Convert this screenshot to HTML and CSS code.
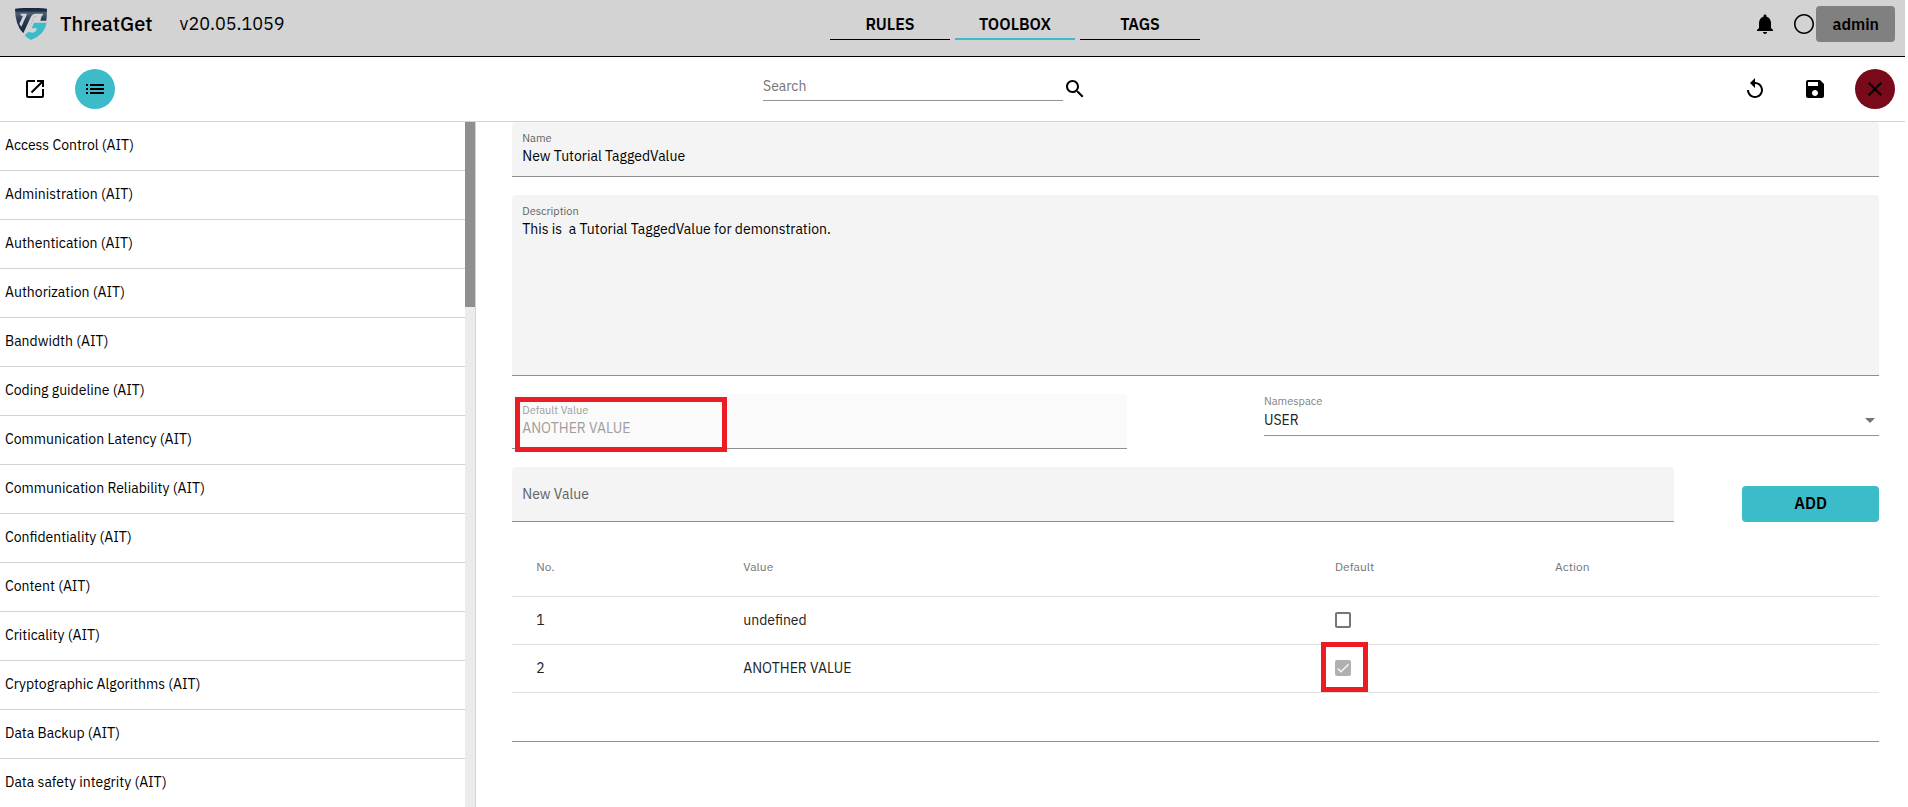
FILE: index.html
```html
<!DOCTYPE html>
<html lang="en">
<head>
    <meta charset="UTF-8">
    <title>ThreatGet</title>
    <link rel="stylesheet" href="styles.css">
</head>
<body>
    <header class="header">
        <div class="brand">
            <svg class="logo" viewBox="0 0 96 96">
                <defs>
                    <linearGradient id="navy" x1="0" y1="0" x2="0" y2="1">
                        <stop offset="0" stop-color="#14243b"/>
                        <stop offset="0.12" stop-color="#1d3048"/>
                        <stop offset="0.2" stop-color="#4f6175"/>
                        <stop offset="0.45" stop-color="#2a3d56"/>
                        <stop offset="1" stop-color="#14243b"/>
                    </linearGradient>
                </defs>
                <path fill="url(#navy)" d="M0 2 Q48 -3 96 2 Q96 22 94 38 H76 L80 24 H64 Q58 24 55 31 L46 54 L25 76 Q0 50 0 2 Z"/>
                <path fill="#d3d3d3" d="M16 17 H36 L34 23 L19 56 L13 48 L24 23 H18 Z"/>
                <path fill="#d3d3d3" d="M62 17 H84 L82 24 H64 Q58 24 55 31 L44 62 L27 79 L25 76 L47 28 Q51 17 62 17 Z"/>
                <path fill="#3bbccb" d="M57 44 H95 Q92 62 80 76 Q66 90 48 96 Q38 92 29 82 L39 72 L55 74 Q63 72 66 61 H50 Z"/>
            </svg>
            <span class="brand-name">ThreatGet</span>
            <span class="brand-version">v20.05.1059</span>
        </div>
        <nav class="tabs">
            <a class="tab" href="#">RULES</a>
            <a class="tab active" href="#">TOOLBOX</a>
            <a class="tab" href="#">TAGS</a>
        </nav>
        <div class="user">
            <button class="icon-link" aria-label="Notifications">
                <svg class="icon" viewBox="0 0 24 24"><path d="M12 22c1.100 0 2-.9 2-2h-4c0 1.100.9 2 2 2zm6-6v-5c0-3.070-1.630-5.640-4.500-6.320V4c0-.83-.67-1.500-1.500-1.500s-1.500.67-1.500 1.500v.68C7.640 5.360 6 7.920 6 11v5l-2 2v1h16v-1l-2-2z"/></svg>
            </button>
            <div class="account">
                <svg class="icon" viewBox="0 0 24 24"><path d="M12 2C6.480 2 2 6.480 2 12s4.480 10 10 10 10-4.480 10-10S17.520 2 12 2zm0 18.400c-4.640 0-8.400-3.760-8.400-8.400S7.360 3.600 12 3.600s8.400 3.760 8.400 8.400-3.760 8.400-8.400 8.400z"/></svg>
                <button class="admin">admin</button>
            </div>
        </div>
    </header>

    <div class="toolbar">
        <div class="tools">
            <button class="tool" aria-label="Open in new window">
                <svg class="icon" viewBox="0 0 24 24"><path d="M19 19H5V5h7V3H5c-1.110 0-2 .9-2 2v14c0 1.100.89 2 2 2h14c1.100 0 2-.9 2-2v-7h-2v7zM14 3v2h3.590l-9.830 9.830 1.410 1.410L19 6.410V10h2V3h-7z"/></svg>
            </button>
            <button class="tool tool-list" aria-label="List">
                <svg class="icon" viewBox="0 0 24 24"><path d="M3 13h2v-2H3v2zm0 4h2v-2H3v2zm0-8h2V7H3v2zm4 4h14v-2H7v2zm0 4h14v-2H7v2zM7 7v2h14V7H7z"/></svg>
            </button>
        </div>
        <form class="search">
            <input class="search-input" type="text" placeholder="Search" aria-label="Search">
            <button class="icon-link" type="button" aria-label="Start search">
                <svg class="icon" viewBox="0 0 24 24"><path d="M15.500 14h-.79l-.28-.27C15.410 12.590 16 11.110 16 9.500 16 5.910 13.090 3 9.500 3S3 5.910 3 9.500 5.910 16 9.500 16c1.610 0 3.090-.59 4.230-1.570l.27.28v.79l5 4.990L20.490 19l-4.990-5zm-6 0C7.010 14 5 11.990 5 9.500S7.010 5 9.500 5 14 7.010 14 9.500 11.990 14 9.500 14z"/></svg>
            </button>
        </form>
        <div class="tools">
            <button class="tool" aria-label="Reset">
                <svg class="icon" viewBox="0 0 24 24"><path d="M12 5V1L7 6l5 5V7c3.310 0 6 2.690 6 6s-2.690 6-6 6-6-2.690-6-6H4c0 4.420 3.580 8 8 8s8-3.580 8-8-3.580-8-8-8z"/></svg>
            </button>
            <button class="tool" aria-label="Save">
                <svg class="icon" viewBox="0 0 24 24"><path d="M17 3H5c-1.110 0-2 .9-2 2v14c0 1.100.89 2 2 2h14c1.100 0 2-.9 2-2V7l-4-4zm-5 16c-1.660 0-3-1.340-3-3s1.340-3 3-3 3 1.340 3 3-1.340 3-3 3zm3-10H5V5h10v4z"/></svg>
            </button>
            <button class="tool tool-close" aria-label="Close">
                <svg class="icon" viewBox="0 0 24 24"><path d="M19 6.410L17.590 5 12 10.590 6.410 5 5 6.410 10.590 12 5 17.590 6.410 19 12 13.410 17.590 19 19 17.590 13.410 12z"/></svg>
            </button>
        </div>
    </div>

    <div class="content">
        <aside class="sidebar">
            <ul class="list">
                <li>Access Control (AIT)</li>
                <li>Administration (AIT)</li>
                <li>Authentication (AIT)</li>
                <li>Authorization (AIT)</li>
                <li>Bandwidth (AIT)</li>
                <li>Coding guideline (AIT)</li>
                <li>Communication Latency (AIT)</li>
                <li>Communication Reliability (AIT)</li>
                <li>Confidentiality (AIT)</li>
                <li>Content (AIT)</li>
                <li>Criticality (AIT)</li>
                <li>Cryptographic Algorithms (AIT)</li>
                <li>Data Backup (AIT)</li>
                <li>Data safety integrity (AIT)</li>
            </ul>
            <div class="scrollbar"><div class="scrollbar-thumb"></div></div>
        </aside>

        <main class="details">
            <div class="field">
                <label for="name">Name</label>
                <input id="name" type="text" value="New Tutorial TaggedValue">
            </div>
            <div class="field field-area">
                <label for="description">Description</label>
                <textarea id="description">This is  a Tutorial TaggedValue for demonstration.</textarea>
            </div>
            <div class="row">
                <div class="field field-half field-disabled">
                    <label for="default-value">Default Value</label>
                    <input id="default-value" type="text" value="ANOTHER VALUE" disabled>
                    <div class="mark mark-field"></div>
                </div>
                <div class="select field-half">
                    <label for="namespace">Namespace</label>
                    <div class="select-box">
                        <select id="namespace">
                            <option>USER</option>
                        </select>
                        <span class="caret"></span>
                    </div>
                </div>
            </div>
            <div class="row">
                <div class="field field-new">
                    <input type="text" placeholder="New Value" aria-label="New Value">
                </div>
                <button class="add">ADD</button>
            </div>

            <div>
                <table class="values">
                    <colgroup>
                        <col class="col-no">
                        <col>
                        <col class="col-default">
                        <col class="col-action">
                    </colgroup>
                    <thead>
                        <tr>
                            <th>No.</th>
                            <th>Value</th>
                            <th>Default</th>
                            <th>Action</th>
                        </tr>
                    </thead>
                    <tbody>
                        <tr>
                            <td>1</td>
                            <td>undefined</td>
                            <td><div class="check"><input type="checkbox" aria-label="Default 1"></div></td>
                            <td></td>
                        </tr>
                        <tr>
                            <td>2</td>
                            <td>ANOTHER VALUE</td>
                            <td>
                                <div class="check">
                                    <input type="checkbox" aria-label="Default 2" checked disabled>
                                    <svg class="check-mark" viewBox="0 0 24 24"><path d="M4.100 12.700 9 17.600 20.300 6.300"/></svg>
                                    <div class="mark mark-check"></div>
                                </div>
                            </td>
                            <td></td>
                        </tr>
                    </tbody>
                </table>
                <div class="values-footer"></div>
            </div>
        </main>
    </div>
</body>
</html>
```

FILE: styles.css
```css
* {
    box-sizing: border-box;
}

body {
    display: flex;
    flex-direction: column;
    height: 100vh;
    margin: 0;
    padding-right: 3px;
    overflow: hidden;
    font-family: "IBM Plex Sans", Roboto, sans-serif;
    font-size: 14px;
    line-height: 20px;
    color: #000;
    background-color: #fff;
}

button,
input,
select,
textarea {
    margin: 0;
    padding: 0;
    border: 0;
    outline: 0;
    background: none;
    font: inherit;
    color: inherit;
}

button {
    cursor: pointer;
}

.icon {
    display: block;
    width: 24px;
    height: 24px;
    fill: #000;
}

/* header */
.header {
    display: flex;
    justify-content: space-between;
    flex: none;
    height: 57px;
    padding: 0 10px 0 15px;
    background-color: #d3d3d3;
    border-bottom: 1px solid #000;
}

.brand {
    display: flex;
    align-items: center;
    height: 48px;
}

.logo {
    width: 32px;
    height: 32px;
    margin-right: 13px;
}

.brand-name {
    margin-right: 27px;
    font-size: 20px;
    font-weight: 500;
}

.brand-version {
    font-size: 18px;
}

.tabs {
    display: flex;
    gap: 5px;
    height: 40px;
}

.tab {
    width: 120px;
    padding-top: 14px;
    border-bottom: 1px solid #000;
    font-size: 16px;
    font-weight: 600;
    text-align: center;
    text-decoration: none;
    color: #000;
}

.tab.active {
    border-bottom: 2px solid #3cbbc9;
}

.user {
    display: flex;
    align-items: center;
    gap: 15px;
    height: 48px;
    padding-left: 8px;
}

.account {
    display: flex;
    align-items: center;
}

.admin {
    height: 36px;
    padding: 0 16px;
    border-radius: 4px;
    background-color: #808080;
    font-size: 16px;
    font-weight: 600;
}

/* toolbar */
.toolbar {
    display: flex;
    align-items: center;
    justify-content: space-between;
    flex: none;
    height: 65px;
    padding: 0 10px 0 15px;
    border-bottom: 1px solid #d3d3d3;
}

.tools {
    display: flex;
    gap: 20px;
}

.tool {
    display: flex;
    align-items: center;
    justify-content: center;
    width: 40px;
    height: 40px;
    border-radius: 50%;
}

.tool-list {
    background-color: #3cbbc9;
}

.tool-close {
    background-color: #780a19;
}

.search {
    display: flex;
    align-items: center;
}

.search-input {
    width: 300px;
    height: 24px;
    padding-bottom: 6px;
    border-bottom: 1px solid #949494;
}

.search-input::placeholder {
    color: #757575;
}

/* list on the left */
.content {
    display: flex;
    flex: 1;
    min-height: 0;
}

.sidebar {
    display: flex;
    flex: none;
    width: 25%;
    overflow: hidden;
    border-right: 1px solid #d3d3d3;
}

.list {
    flex: 1;
    margin: 0;
    padding: 0;
    list-style: none;
}

.list li {
    height: 49px;
    padding: 13px 5px;
    border-bottom: 1px solid #d3d3d3;
}

.scrollbar {
    width: 10px;
    background-color: #ebebeb;
}

.scrollbar-thumb {
    height: 27%;
    background-color: #8f8f8f;
}

/* form */
.details {
    display: flex;
    flex-direction: column;
    flex: 1;
    gap: 18px;
    padding: 0 26px 0 36px;
}

.field {
    position: relative;
    display: flex;
    flex-direction: column;
    height: 55px;
    padding: 9px 10px 0;
    border-bottom: 1px solid #8f8f8f;
    border-radius: 4px 4px 0 0;
    background-color: #f4f4f4;
}

.field label,
.select label {
    font-size: 11px;
    line-height: 14px;
    color: #616161;
}

.field input {
    height: 22px;
}

.field textarea {
    flex: 1;
    padding-top: 1px;
    resize: none;
}

.field-area {
    height: 181px;
}

.row {
    display: flex;
    align-items: flex-end;
    justify-content: space-between;
}

.field-half {
    width: 45%;
}

.field-disabled {
    background-color: #fafafa;
}

.field-disabled label,
.field-disabled input {
    color: #9e9e9e;
}

.select {
    display: flex;
    flex-direction: column;
    align-self: flex-start;
    border-bottom: 1px solid #949494;
}

.select label {
    color: #808080;
}

.select-box {
    position: relative;
    display: flex;
    padding-bottom: 3px;
}

.select select {
    flex: 1;
    height: 24px;
    appearance: none;
    color: #212121;
}

.caret {
    position: absolute;
    top: 10px;
    right: 4px;
    border: 5px solid transparent;
    border-top-color: #757575;
    border-bottom: 0;
    pointer-events: none;
}

.field-new {
    width: 85%;
    padding-top: 16px;
}

.field-new input::placeholder {
    color: #616161;
}

.add {
    width: 10%;
    height: 36px;
    padding-bottom: 2px;
    border-radius: 4px;
    background-color: #3cbbc9;
    font-size: 16px;
    font-weight: 600;
}

/* table */
.values {
    width: 100%;
    table-layout: fixed;
    border-spacing: 0;
    text-align: left;
    color: #212121;
}

.col-no {
    width: 231px;
}

.col-default {
    width: 220px;
}

.col-action {
    width: 324px;
}

.values th,
.values td {
    height: 48px;
    padding: 0 0 2px;
    border-bottom: 1px solid #e0e0e0;
}

.values th {
    height: 57px;
    font-size: 12px;
    font-weight: normal;
    color: #757575;
}

.values th:first-child,
.values td:first-child {
    padding-left: 24px;
}

.check {
    position: relative;
    width: 16px;
    height: 16px;
}

.check input {
    display: block;
    width: 16px;
    height: 16px;
    appearance: none;
    border: 2px solid #757575;
    border-radius: 2px;
}

.check input:checked {
    border-color: #b0b0b0;
    background-color: #b0b0b0;
}

.check-mark {
    position: absolute;
    top: 0;
    left: 0;
    width: 16px;
    height: 16px;
    fill: none;
    stroke: #fafafa;
    stroke-width: 2;
}

.values-footer {
    height: 49px;
    border-bottom: 1px solid #8f8f8f;
}

/* red highlight boxes */
.mark {
    position: absolute;
    border: 5px solid #ed1c24;
    pointer-events: none;
}

.mark-field {
    top: 3px;
    left: 3px;
    width: 212px;
    height: 55px;
}

.mark-check {
    top: -18px;
    left: -14px;
    width: 47px;
    height: 50px;
}
```
